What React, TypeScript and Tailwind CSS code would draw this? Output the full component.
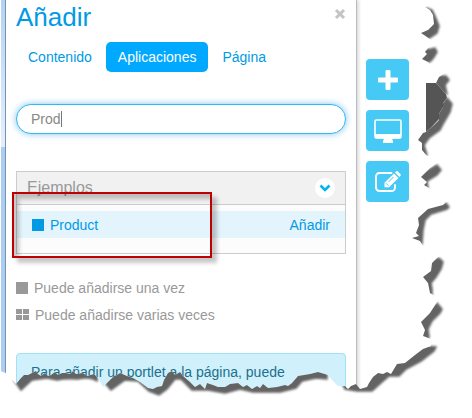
import { useState } from 'react';

const tabs = ['Contenido', 'Aplicaciones', 'Página'];

function PlusIcon() {
  return (
    <svg width="22" height="22" viewBox="0 0 22 22" aria-hidden="true">
      <path
        d="M9.500 1h3a1 1 0 0 1 1 1v6.500H20a1 1 0 0 1 1 1v3a1 1 0 0 1-1 1h-6.500V20a1 1 0 0 1-1 1h-3a1 1 0 0 1-1-1v-6.500H2a1 1 0 0 1-1-1v-3a1 1 0 0 1 1-1h6.500V2a1 1 0 0 1 1-1z"
        fill="white"
      />
    </svg>
  );
}

function DesktopIcon() {
  return (
    <svg width="28" height="24" viewBox="0 0 28 24" fill="none" aria-hidden="true">
      <rect x="1" y="1" width="26" height="18" rx="1.5" stroke="white" strokeWidth="1.6" />
      <path d="M1 15h26v3.200a1.300 1.300 0 0 1-1.300 1.300H18l1 2.500v2H9v-2l1-2.500H2.300A1.300 1.300 0 0 1 1 18.200z" fill="white" />
    </svg>
  );
}

function EditIcon() {
  return (
    <svg width="26" height="22" viewBox="0 0 26 22" fill="none" aria-hidden="true">
      <path
        d="M16.500 2H4.500A3.500 3.500 0 0 0 1 5.500v11A3.500 3.500 0 0 0 4.500 20h12a3.500 3.500 0 0 0 3.500-3.500V14"
        stroke="white"
        strokeWidth="1.900"
        strokeLinecap="round"
      />
      <path d="M19 2.500l4.500 4.500L14 16.200H9.500v-4.500z" fill="white" />
      <path d="M20 1.500l.9-.9a1.500 1.500 0 0 1 2.100 0l2.300 2.300a1.500 1.500 0 0 1 0 2.100l-.9.900z" fill="white" />
      <path d="M11 12.300l2.400 2.400M13.500 11l5-5" stroke="#47c9f5" strokeWidth="1" />
    </svg>
  );
}

// Ragged outline of the paper, bottom left to top right
const outside =
  'M0 418V371L6 373L16 384L21 378L24 375L28 375L32 373L36 371L38 374L41 376L45 373L48 376L51 375L55 372L58 375L62 373L66 373L70 374L73 371L76 374L83 373L87 376L94 374L98 378L103 387L108 382L114 376L117 375L120 373L127 376L133 378L140 382L148 388L153 389L157 387L162 386L164 380L168 373L172 371L175 375L180 372L183 376L190 382L195 387L200 384L205 389L207 383L213 385L218 387L225 387L230 384L238 383L243 387L247 385L252 389L257 386L260 388L263 384L268 388L277 387L285 385L288 386L292 383L298 376L310 374L318 372L328 375L332 380L338 386L345 386L348 389L351 386L356 384L360 389L367 387L369 383L373 377L378 373L383 374L387 372L391 374L397 364L405 363L415 355L423 349L431 346V339L423 336L425 330L421 322L430 313L437 302L436 297L430 293L428 283L423 277L431 271L432 263L438 257L472 252V248L423 246L420 241L412 238L419 236L416 233L419 225L418 218L428 209L443 205L446 202L472 200V192L432 190L424 185L427 182L421 177L430 168L437 163L472 161V158L427 156L422 150L422 143L418 140L423 133L426 132L434 125L436 123L439 120L439 114L443 107L443 103L447 98L446 94L436 83L439 77L445 73L472 70L431 65L428 62L422 59L427 54L425 52L428 48L435 45L431 40L427 37L421 33L428 30L434 24L433 15L430 10L425 7L440 0H472V418Z';

const shadows = [
  'M14 380L24 370H98L97 381Q90 376 78 379Q65 378 57 380L47 378L32 380L21 390Z',
  'M104 382L118 368H126L146 384L160 384L165 370H180L205 382H236L270 382L292 378L300 370H318L327 370V379L316 378L302 381L296 388L280 392L253 392L240 389L225 393L208 390L192 390L181 379L175 379L167 389L159 395L149 391L138 381L125 380L111 390Z',
  'M342 383L356 380L365 382L376 369L388 369L396 361L421 346L436 347L434 351L421 361L406 369L399 376L389 376L381 383L372 391L357 391L345 389Z',
  'M427 342L426 338L418 335L416 322L437 303L442 309L440 313L432 321L428 329L429 337Z',
  'M432 295L426 293L418 276L430 268L431 260L439 258L443 262L441 269L436 277L431 283L432 289Z',
  'M422 244L408 239L412 215L427 206L446 203L449 207L447 209L431 214L425 220L423 230Z',
  'M428 188L418 184L416 177L437 165L441 170L437 175L427 181Z',
  'M427 155L420 154L414 140L420 130L433 120L439 107L447 98L452 104L450 112L443 124L440 130L429 138L424 145Z',
  'M433 82L438 76L446 76L449 80L445 85L447 94L440 91Z',
  'M426 8L432 10L435 16L439 26L437 33L431 37L425 40L416 33L430 22Z',
  'M431 49L435 48L437 52L434 57L431 61L427 63L416 60L420 50Z',
];

function TornEdge() {
  return (
    <svg
      className="pointer-events-none absolute top-0 left-0"
      width="472"
      height="418"
      viewBox="0 0 472 418"
      aria-hidden="true"
    >
      <defs>
        <clipPath id="outside">
          <path d={outside} />
        </clipPath>
        <filter id="soft" x="-20%" y="-20%" width="140%" height="140%">
          <feGaussianBlur stdDeviation="1.2" />
        </filter>
      </defs>
      <path d="M426 83H437L448 96L440 118L426 133Z" fill="#555" />
      <g clipPath="url(#outside)">
        <rect width="472" height="418" fill="white" />
        <path d="M444 71H427V23H432" stroke="#ececec" fill="none" />
        {shadows.map((d) => (
          <path key={d} d={d} fill="#636363" stroke="#636363" strokeWidth="1.5" filter="url(#soft)" />
        ))}
      </g>
    </svg>
  );
}

export default function App() {
  const [active, setActive] = useState('Aplicaciones');
  const [query, setQuery] = useState('Prod');

  return (
    <div className="relative flex min-h-screen items-stretch overflow-hidden bg-white font-['Liberation_Sans',Arial,sans-serif] text-sm text-[#999]">
      {/* Window frame */}
      <div className="ml-px flex w-[5px] flex-col border-r border-[#6f8fb5]">
        <div className="h-[147px] bg-linear-to-b from-[#b5d2f2] to-[#e6f0fa]" />
        <div className="flex-1 bg-[#abcdf0]" />
      </div>

      {/* Panel */}
      <main className="flex-1 border-r border-[#bbb] px-[10px] shadow-[2px_0_3px_#ddd]">
        <header className="flex items-start justify-between">
          <h1 className="text-[26px] leading-[34px] text-[#009ae5]">Añadir</h1>
          <button aria-label="Cerrar" className="mt-2 text-[#c4c4c4]">
            <svg width="12" height="12" viewBox="0 0 12 12">
              <path d="M2 2l8 8M10 2l-8 8" stroke="currentColor" strokeWidth="3" />
            </svg>
          </button>
        </header>

        <nav className="mt-2 flex gap-0.5">
          {tabs.map((tab) => (
            <button
              key={tab}
              onClick={() => setActive(tab)}
              className={`h-[30px] rounded-[5px] px-3 ${
                tab === active ? 'bg-[#00a9ff] text-white' : 'text-[#009ae5]'
              }`}
            >
              {tab}
            </button>
          ))}
        </nav>

        <div className="relative mt-8">
          <input
            type="text"
            aria-label="Buscar"
            value={query}
            onChange={(e) => setQuery(e.target.value)}
            className="block h-[30px] w-full rounded-full border border-[#2fb8f7] bg-white px-3.5 text-[#888] shadow-[0_0_7px_#85c4f0] outline-none"
          />
          {/* Text cursor */}
          <span className="absolute top-[7px] left-[45px] h-4 w-px bg-[#777]" />
        </div>

        <section className="relative mt-[37px] border border-[#ccc] bg-[#fcfcfc]">
          <h2 className="border-b border-[#ccc] bg-[#f1f1f1]">
            <button className="flex h-8 w-full items-center justify-between px-2.5 text-base">
              Ejemplos
              <span className="flex size-5 items-center justify-center rounded-full bg-white">
                <svg width="12" height="12" viewBox="0 0 12 12" fill="none" aria-hidden="true">
                  <path d="M1.500 3.500L6 8l4.500-4.500" stroke="#00b5ea" strokeWidth="2.600" />
                </svg>
              </span>
            </button>
          </h2>
          <div className="mt-1.5 mb-[15px] flex h-[27px] items-center bg-[#e3f4fc] px-[15px] text-[#009ae5]">
            <span className="mr-1.5 size-3 bg-[#009ae5]" />
            <span className="flex-1">Product</span>
            <button>Añadir</button>
          </div>
          {/* Highlight frame */}
          <div className="pointer-events-none absolute top-[20px] -left-[5px] h-[66px] w-[200px] border-2 border-[#bd0000] shadow-[5px_5px_4px_#00000038,inset_5px_5px_4px_#00000038]" />
        </section>

        <ul className="mt-5">
          <li className="flex h-[27px] items-center">
            <span className="mr-1.5 size-3 bg-[#999]" />
            Puede añadirse una vez
          </li>
          <li className="flex h-[27px] items-center">
            <span className="mr-1.5 grid h-[11px] w-[13px] grid-cols-2 gap-px">
              <span className="bg-[#999]" />
              <span className="bg-[#999]" />
              <span className="bg-[#999]" />
              <span className="bg-[#999]" />
            </span>
            Puede añadirse varias veces
          </li>
        </ul>

        <p className="mt-[25px] overflow-hidden rounded-sm border border-[#9be3f5] bg-[#d0f0fb] px-3.5 pt-2 pb-8 leading-5 text-[#1b708d]">
          Para añadir un portlet a la página, puede
        </p>
      </main>

      {/* Page controls */}
      <aside className="flex w-[115px] flex-col gap-[10px] pt-[59px] pl-[9px] text-white">
        <button
          aria-label="Añadir"
          className="flex h-[41px] w-[43px] items-center justify-center rounded-sm bg-[#47c9f5]"
        >
          <PlusIcon />
        </button>
        <button
          aria-label="Vista previa"
          className="flex h-[41px] w-[43px] items-center justify-center rounded-sm bg-[#47c9f5]"
        >
          <DesktopIcon />
        </button>
        <button
          aria-label="Editar"
          className="flex h-[41px] w-[43px] items-center justify-center rounded-sm bg-[#47c9f5]"
        >
          <EditIcon />
        </button>
      </aside>

      <TornEdge />
    </div>
  );
}
